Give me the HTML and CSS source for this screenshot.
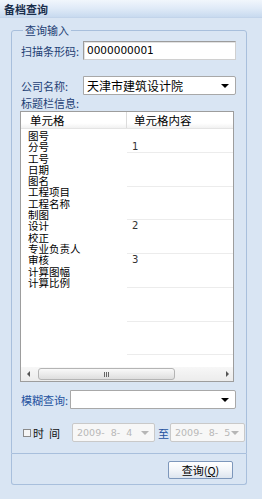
FILE: index.html
```html
<!DOCTYPE html>
<html lang="zh">
<head>
<meta charset="utf-8">
<title>备档查询</title>
<link rel="stylesheet" href="styles.css">
</head>
<body>
<div class="window">
  <div class="titlebar">备档查询</div>
  <fieldset class="group">
    <legend class="legend">查询输入</legend>
    <div class="row row-first">
      <span class="label w63">扫描条形码:</span>
      <div class="textbox">0000000001</div>
    </div>
    <div class="row row-second">
      <span class="label w63">公司名称:</span>
      <div class="combo"><span class="combo-text">天津市建筑设计院</span><span class="arrow"></span></div>
    </div>
    <div class="label caption">标题栏信息:</div>
    <div class="grid">
      <div class="grid-head">
        <div class="col-a">单元格</div>
        <div class="col-b">单元格内容</div>
      </div>
      <div class="grid-body">
        <div class="list names">
          <div>图号</div><div>分号</div><div>工号</div><div>日期</div><div>图名</div><div>工程项目</div><div>工程名称</div><div>制图</div><div>设计</div><div>校正</div><div>专业负责人</div><div>审核</div><div>计算图幅</div><div>计算比例</div>
        </div>
        <div class="list values">
          <div>&nbsp;</div><div>1</div><div>&nbsp;</div><div>&nbsp;</div><div>&nbsp;</div><div>&nbsp;</div><div>&nbsp;</div><div>&nbsp;</div><div>2</div><div>&nbsp;</div><div>&nbsp;</div><div>3</div><div>&nbsp;</div><div>&nbsp;</div>
        </div>
      </div>
      <div class="hscroll">
        <span class="sarrow left"></span>
        <div class="track">
          <div class="thumb"><span class="grip"></span></div>
        </div>
        <span class="sarrow right"></span>
      </div>
    </div>
    <div class="row row-fuzzy">
      <span class="label label-strong w50">模糊查询:</span>
      <div class="combo"><span class="combo-text"></span><span class="arrow"></span></div>
    </div>
    <div class="row row-time">
      <span class="check"></span>
      <span class="time-label">时&nbsp;&nbsp;间</span>
      <div class="date"><span class="date-text">2009-&nbsp;&nbsp;8-&nbsp;&nbsp;4</span><span class="arrow arrow-dis"></span></div>
      <span class="to">至</span>
      <div class="date date2"><span class="date-text">2009-&nbsp;&nbsp;8-&nbsp;&nbsp;5</span><span class="arrow arrow-dis"></span></div>
    </div>
  </fieldset>
  <div class="footer">
    <button class="btn">查询(<u>Q</u>)</button>
  </div>
</div>
</body>
</html>
```
FILE: styles.css
```css
* { box-sizing: border-box; }
html, body {
  margin: 0;
  padding: 0;
}
body {
  width: 262px;
  height: 499px;
  background: #dae6f4;
  font-family: "Noto Sans CJK SC", "Noto Sans", sans-serif;
  font-size: 11px;
  color: #000;
  overflow: hidden;
}
.window {
  width: 262px;
  height: 499px;
  background: #d9e5f3;
}
.titlebar {
  height: 18px;
  line-height: 18px;
  padding-left: 4px;
  font-weight: bold;
  font-size: 11px;
  color: #1b2f4d;
  background: linear-gradient(#f1f6fc 0%, #dfeaf7 50%, #c8daef 100%);
  border-bottom: 1px solid #c2d4ea;
}
.group {
  margin: 6px 15px 0 11px;
  padding: 0 10px 11px 8px;
  border: 1px solid #a8bfdc;
  border-radius: 3px 3px 0 0;
  min-width: 0;
}
.legend {
  margin-left: 3px;
  padding: 0 2px;
  line-height: 13px;
  font-size: 11px;
  color: #1d3e73;
}
.row {
  display: flex;
  align-items: center;
  height: 19px;
}
.row-first { margin-top: 4px; }
.row-second { margin-top: 16px; }
.row-fuzzy { margin-top: 8px; }
.row-time { margin-top: 14px; }
.label {
  color: #1d3e73;
  white-space: nowrap;
  flex: none;
}
.label-strong { color: #2553a0; }
.w63 { width: 63px; padding-left: 1px; }
.w50 { width: 50px; padding-left: 1px; }
.caption {
  margin-top: 1px;
  line-height: 14px;
  padding-left: 1px;
}
.textbox {
  flex: 1;
  height: 19px;
  background: #fff;
  border: 1px solid #9c9c9c;
  border-right-color: #d0d0d0;
  border-bottom-color: #d0d0d0;
  box-shadow: inset 1px 1px 0 #e2e2e2;
  padding-left: 3px;
  line-height: 17px;
  font-family: "DejaVu Sans", sans-serif;
  font-size: 10.5px;
}
.combo {
  flex: 1;
  height: 19px;
  background: #fff;
  border: 1px solid #a8a8a8;
  border-radius: 0 2px 2px 0;
  display: flex;
  align-items: center;
  padding-left: 3px;
  padding-right: 6px;
}
.combo-text { flex: 1; line-height: 17px; font-size: 12px; }
.arrow {
  width: 0;
  height: 0;
  border-left: 4px solid transparent;
  border-right: 4px solid transparent;
  border-top: 4px solid #000;
  flex: none;
}
.arrow-dis { border-top-color: #b6b6b6; }
.grid {
  margin-top: 1px;
  width: 214px;
  height: 271px;
  border: 1px solid #9d9d9d;
  background: #fff;
  display: flex;
  flex-direction: column;
}
.grid-head {
  height: 17px;
  display: flex;
  background: linear-gradient(#ffffff 0%, #ffffff 70%, #f1f1f1 100%);
  border-bottom: 1px solid #e4e4e4;
  line-height: 16px;
  font-size: 11.5px;
}
.col-a {
  width: 106px;
  padding-left: 9px;
  border-right: 1px solid #dcdcdc;
}
.col-b {
  flex: 1;
  padding-left: 7px;
}
.grid-body {
  flex: 1;
  display: flex;
  padding-top: 1px;
}
.list { line-height: 11.3px; font-size: 10.5px; }
.list div { height: 11.3px; white-space: nowrap; }
.names {
  width: 106px;
  padding-left: 7px;
}
.values {
  flex: 1;
  padding-left: 5px;
  font-family: "DejaVu Sans", sans-serif;
  font-size: 10px;
  color: #333;
  background-image: repeating-linear-gradient(to bottom, transparent 0, transparent 22px, #ececec 22px, #ececec 23px, transparent 23px, transparent 33.7px);
}
.hscroll {
  height: 14px;
  display: flex;
  align-items: center;
  background: linear-gradient(#f7f7f7, #ececec);
  padding: 0 4px 0 6px;
}
.track {
  flex: 1;
  height: 12px;
  display: flex;
  padding-left: 8px;
  padding-right: 51px;
}
.thumb {
  flex: 1;
  height: 12px;
  border: 1px solid #b4b4b4;
  border-radius: 3px;
  background: linear-gradient(#f9f9f9, #dedede);
  display: flex;
  align-items: center;
  justify-content: center;
}
.grip {
  width: 6px;
  height: 5px;
  background: repeating-linear-gradient(to right, #666 0, #666 1px, transparent 1px, transparent 2px);
}
.sarrow {
  width: 0;
  height: 0;
  border-top: 3px solid transparent;
  border-bottom: 3px solid transparent;
}
.sarrow.left { border-right: 3px solid #555; }
.sarrow.right { border-left: 3px solid #555; }
.check {
  width: 8px;
  height: 8px;
  margin-left: 3px;
  border: 1px solid #8a8a8a;
  background: #f6f6f6;
  flex: none;
}
.time-label {
  margin-left: 2px;
  width: 39px;
  color: #111;
  white-space: nowrap;
  flex: none;
}
.date {
  width: 83px;
  height: 19px;
  border: 1px solid #c9c9c9;
  border-radius: 2px;
  background: #f7f7f7;
  color: #b8b8b8;
  display: flex;
  align-items: center;
  justify-content: space-between;
  padding: 0 5px 0 4px;
  flex: none;
}
.date-text {
  font-family: "DejaVu Sans", sans-serif;
  font-size: 9.5px;
  white-space: nowrap;
}
.date2 { width: 75px; }
.to {
  margin: 0 0 0 3px;
  width: 12px;
  color: #2553a0;
  flex: none;
}
.footer {
  margin: 0 15px 0 11px;
  height: 31px;
  border: 1px solid #a8bfdc;
  border-top: none;
  border-radius: 0 0 3px 3px;
  display: flex;
  justify-content: flex-end;
  padding: 7px 13px 0 0;
}
.btn {
  width: 65px;
  height: 18px;
  padding: 0;
  font-family: "Noto Sans CJK SC", sans-serif;
  font-size: 11px;
  line-height: 16px;
  color: #000;
  border: 1px solid #7d97bb;
  border-radius: 2px;
  background: linear-gradient(#ffffff 0%, #f2f5f9 50%, #dde5ef 100%);
}
```
